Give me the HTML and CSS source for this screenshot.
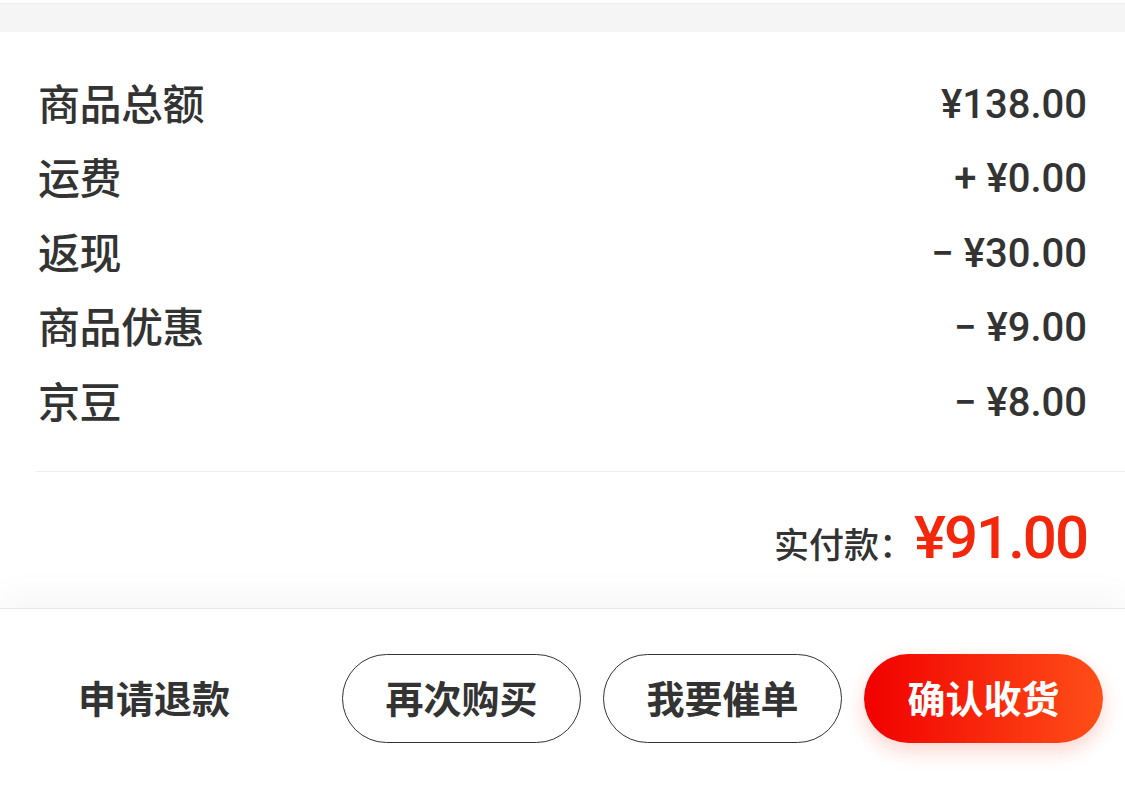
FILE: index.html
```html
<!DOCTYPE html>
<html lang="zh-CN">
<head>
  <meta charset="UTF-8">
  <meta name="viewport" content="width=device-width, initial-scale=1.0">
  <title>订单金额</title>
  <link rel="stylesheet" href="styles.css">
</head>
<body>
  <div class="gap"></div>

  <div class="summary">
    <div class="row"><span class="label">商品总额</span><span class="amount">¥138.00</span></div>
    <div class="row"><span class="label">运费</span><span class="amount"><span class="sign">+</span>¥0.00</span></div>
    <div class="row"><span class="label">返现</span><span class="amount"><span class="sign">−</span>¥30.00</span></div>
    <div class="row"><span class="label">商品优惠</span><span class="amount"><span class="sign">−</span>¥9.00</span></div>
    <div class="row"><span class="label">京豆</span><span class="amount"><span class="sign">−</span>¥8.00</span></div>
  </div>

  <div class="divider"></div>

  <div class="total">
    <span class="total-label">实付款：</span>
    <span class="total-amount">¥91.00</span>
  </div>

  <div class="action-bar">
    <span class="link-btn">申请退款</span>
    <button class="btn">再次购买</button>
    <button class="btn">我要催单</button>
    <button class="btn btn-primary">确认收货</button>
  </div>
</body>
</html>
```
FILE: styles.css
```css
body {
  margin: 0;
  background: #fff;
  color: #333;
  font-family: Roboto, "Noto Sans CJK SC", sans-serif;
}

.gap {
  margin-top: 3px;
  height: 28px;
  background: #f5f5f5;
  border-top: 1px solid #ececec;
}

.summary {
  padding: 32px 38px 34px 38px;
}

.row {
  display: flex;
  justify-content: space-between;
  align-items: center;
  height: 74.5px;
}

.label {
  font-family: "Noto Sans CJK SC", sans-serif;
  font-size: 42px;
  font-weight: 500;
  letter-spacing: -0.5px;
}

.amount {
  font-family: Roboto, sans-serif;
  font-size: 40px;
  font-weight: 500;
  margin-top: 6px;
}

.sign {
  margin-right: 10px;
}

.divider {
  margin-left: 36px;
  height: 1px;
  background: #eeeeee;
}

.total {
  display: flex;
  justify-content: flex-end;
  align-items: baseline;
  height: 136px;
  box-sizing: border-box;
  padding: 30px 38px 0 0;
}

.total-label {
  font-family: "Noto Sans CJK SC", sans-serif;
  font-size: 35px;
  font-weight: 500;
}

.total-amount {
  font-family: Roboto, sans-serif;
  font-size: 60px;
  font-weight: 500;
  letter-spacing: -2px;
  color: #f2270c;
}

.action-bar {
  display: flex;
  align-items: flex-start;
  gap: 22px;
  height: 180px;
  box-sizing: border-box;
  padding: 45px 21px 45px 78px;
  border-top: 1px solid #e8e8e8;
  box-shadow: 0 -14px 30px rgba(0, 0, 0, 0.035);
  position: relative;
  background: #fff;
}

.link-btn {
  font-family: "Noto Sans CJK SC", sans-serif;
  font-size: 38px;
  font-weight: 700;
  line-height: 86px;
  margin-right: 90px;
  width: 152px;
}

.btn {
  width: 239px;
  height: 89px;
  border: 1px solid #333;
  border-radius: 45px;
  background: #fff;
  color: #333;
  font-family: "Noto Sans CJK SC", sans-serif;
  font-size: 38px;
  font-weight: 700;
  padding: 0 0 4px 0;
}

.btn-primary {
  border: none;
  color: #fff;
  background: linear-gradient(90deg, #f10000, #ff4f18);
  box-shadow: 0 8px 20px rgba(242, 39, 12, 0.2);
}
```
